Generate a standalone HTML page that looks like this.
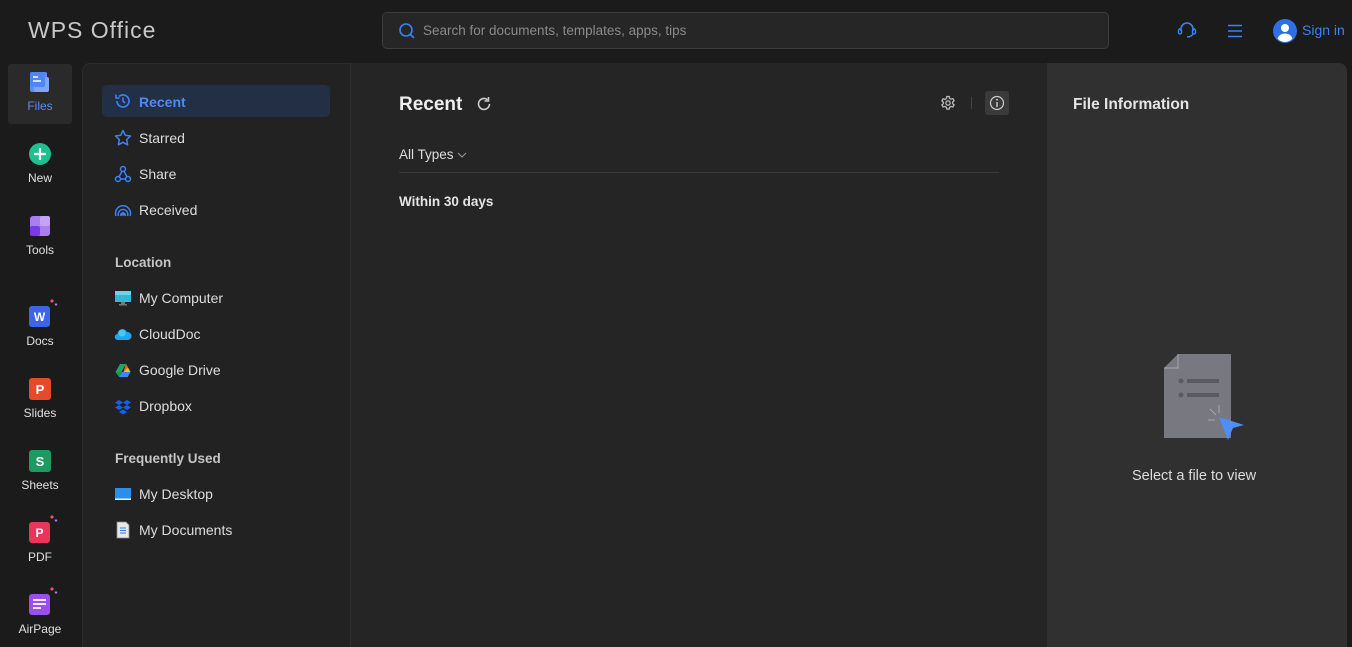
<!DOCTYPE html>
<html><head><meta charset="utf-8"><style>
*{margin:0;padding:0;box-sizing:border-box}
body{width:1352px;height:647px;overflow:hidden;background:#1b1b1b;font-family:"Segoe UI","Liberation Sans",sans-serif;color:#ddd;position:relative}
.abs{position:absolute}
.logo{left:28px;top:17px;font-size:23px;color:#c8c8c8;letter-spacing:1px;font-weight:300}
.search{left:382px;top:12px;width:727px;height:37px;border:1px solid #3c3c3c;border-radius:5px;background:#262626}
.search span{position:absolute;left:40px;top:10px;font-size:13.5px;color:#8a8a8a}
.rail-item{position:absolute;left:8px;width:64px;text-align:center;font-size:12px;color:#e0e0e0}
.side{left:82px;top:63px;width:268px;height:584px;background:#222;border-top-left-radius:8px;border-top:1px solid #2c2c2c;border-left:1px solid #2c2c2c}
.main{left:350px;top:63px;width:697px;height:584px;background:#252525;border-left:1px solid #2e2e2e}
.right{left:1047px;top:63px;width:300px;height:584px;background:#303030;border-top-right-radius:8px}
.nav{position:absolute;left:33px;font-size:14px;color:#ddd}
.ico{position:absolute;left:114px;width:18px;height:18px}
.hdr{position:absolute;left:115px;font-size:13.5px;font-weight:bold;color:#c5c5c5}
</style></head><body>
<div class="abs logo">WPS Office</div>
<div class="abs search">
<svg class="abs" style="left:15px;top:9px" width="18" height="18" viewBox="0 0 18 18"><circle cx="8" cy="8" r="6" fill="none" stroke="#3b82f6" stroke-width="1.6"/><path d="M12.5 12.5L16 16" stroke="#3b82f6" stroke-width="1.6"/></svg>
<span>Search for documents, templates, apps, tips</span></div>
<svg class="abs" style="left:1177px;top:21px" width="20" height="18" viewBox="0 0 20 18"><path d="M4 10V8a6 6 0 0 1 12 0v2" fill="none" stroke="#3b82f6" stroke-width="1.6"/><rect x="1.5" y="8" width="3" height="5" rx="1.5" fill="none" stroke="#3b82f6" stroke-width="1.4"/><rect x="15.5" y="8" width="3" height="5" rx="1.5" fill="none" stroke="#3b82f6" stroke-width="1.4"/><path d="M16 13q-2 3-6 3" fill="none" stroke="#3b82f6" stroke-width="1.4"/></svg>
<svg class="abs" style="left:1228px;top:24px" width="14" height="14" viewBox="0 0 14 14"><path d="M0 1.5h14M0 7h14M0 12.5h14" stroke="#3b82f6" stroke-width="1.5"/></svg>
<svg class="abs" style="left:1273px;top:19px" width="24" height="24" viewBox="0 0 24 24"><circle cx="12" cy="12" r="12" fill="#2f6fe4"/><circle cx="12" cy="9" r="4" fill="#fff"/><path d="M4.5 19.5q2-5 7.5-5t7.5 5q-3 3.5-7.5 3.5t-7.5-3.5z" fill="#fff"/></svg>
<div class="abs" style="left:1302px;top:22px;font-size:14px;color:#3b82f6">Sign in</div>

<div class="abs" style="left:8px;top:64px;width:64px;height:60px;background:#2a2a2a;border-radius:3px"></div>
<svg class="abs" style="left:30px;top:72px" width="20" height="20" viewBox="0 0 20 20"><rect x="0" y="0" width="17" height="20" rx="2" fill="#5b8ef5"/><rect x="4" y="5" width="15" height="15" rx="2" fill="#7ba6fa"/><rect x="0" y="0" width="15" height="15" rx="2" fill="#4f86f3"/><path d="M3 5h5M3 9h8" stroke="#fff" stroke-width="1.5"/></svg>
<div class="rail-item" style="top:99px;color:#5b8ef5">Files</div>
<svg class="abs" style="left:29px;top:143px" width="22" height="22"><circle cx="11" cy="11" r="11" fill="#1fbf8f"/><path d="M11 5v12M5 11h12" stroke="#fff" stroke-width="2.2"/></svg>
<div class="rail-item" style="top:171px">New</div>
<svg class="abs" style="left:30px;top:216px" width="20" height="20"><rect width="20" height="20" rx="3" fill="#a97ef0"/><rect x="10" width="10" height="10" rx="2" fill="#c4a3f5"/><rect y="10" width="10" height="10" rx="2" fill="#7b3ae8"/></svg>
<div class="rail-item" style="top:243px">Tools</div>
<svg class="abs" style="left:28px;top:298px" width="32" height="30"><path d="M24 1l2 2-2 2-2-2z" fill="#ef4f6c"/><path d="M28 5l1.5 1.5-1.5 1.5-1.5-1.5z" fill="#b86cf0"/><rect x="1" y="8" width="21" height="21" rx="3" fill="#3c66e8"/><text x="11.5" y="23" font-size="12" font-weight="bold" fill="#fff" text-anchor="middle" font-family="Liberation Sans">W</text></svg>
<div class="rail-item" style="top:334px">Docs</div>
<svg class="abs" style="left:29px;top:378px" width="22" height="22"><rect width="22" height="22" rx="3" fill="#e54a2b"/><text x="11" y="16" font-size="13" font-weight="bold" fill="#fff" text-anchor="middle" font-family="Liberation Sans">P</text></svg>
<div class="rail-item" style="top:406px">Slides</div>
<svg class="abs" style="left:29px;top:450px" width="22" height="22"><rect width="22" height="22" rx="3" fill="#1d9a62"/><text x="11" y="16" font-size="13" font-weight="bold" fill="#fff" text-anchor="middle" font-family="Liberation Sans">S</text></svg>
<div class="rail-item" style="top:478px">Sheets</div>
<svg class="abs" style="left:28px;top:514px" width="32" height="30"><path d="M24 1l2 2-2 2-2-2z" fill="#ef4f6c"/><path d="M28 5l1.5 1.5-1.5 1.5-1.5-1.5z" fill="#b86cf0"/><rect x="1" y="8" width="21" height="21" rx="3" fill="#e8355a"/><text x="11.5" y="23" font-size="12" font-weight="bold" fill="#fff" text-anchor="middle" font-family="Liberation Sans">P</text></svg>
<div class="rail-item" style="top:550px">PDF</div>
<svg class="abs" style="left:28px;top:586px" width="32" height="30"><path d="M24 1l2 2-2 2-2-2z" fill="#ef4f6c"/><path d="M28 5l1.5 1.5-1.5 1.5-1.5-1.5z" fill="#b86cf0"/><rect x="1" y="8" width="21" height="21" rx="3" fill="#9b4ef0"/><path d="M5 14h13M5 18h13M5 22h8" stroke="#fff" stroke-width="1.7"/></svg>
<div class="rail-item" style="top:622px">AirPage</div>

<div class="abs side"></div>
<div class="abs main"></div>
<div class="abs right"></div>

<div class="abs" style="left:102px;top:85px;width:228px;height:32px;background:#232f45;border-radius:5px"></div>
<svg class="ico" style="top:92px" viewBox="0 0 18 18"><path d="M3 9a6 6 0 1 0 2-4.5" fill="none" stroke="#3b82f6" stroke-width="1.7"/><path d="M2 2.5v3.5h3.5" fill="none" stroke="#3b82f6" stroke-width="1.6"/><path d="M9 5.5V9l2 2" fill="none" stroke="#3b82f6" stroke-width="1.6"/></svg>
<div class="nav abs" style="left:139px;top:94px;color:#4a8cf7;font-weight:bold">Recent</div>
<svg class="ico" style="top:129px" viewBox="0 0 18 18"><path d="M9 1.5l2.3 4.8 5.2.7-3.8 3.6.9 5.2L9 13.3l-4.6 2.5.9-5.2L1.5 7l5.2-.7z" fill="none" stroke="#3b82f6" stroke-width="1.5" stroke-linejoin="round"/></svg>
<div class="nav abs" style="left:139px;top:130px">Starred</div>
<svg class="ico" style="top:165px" viewBox="0 0 18 18" fill="none" stroke="#3b82f6" stroke-width="1.5"><circle cx="9" cy="4" r="2.5"/><circle cx="4" cy="14" r="2.5"/><circle cx="14" cy="14" r="2.5"/><path d="M8 6.3L5 11.8M10 6.3l3 5.5M6.5 14h5"/></svg>
<div class="nav abs" style="left:139px;top:166px">Share</div>
<svg class="ico" style="top:201px" viewBox="0 0 18 18" fill="none" stroke="#3b82f6" stroke-width="1.5"><path d="M2 15a7.5 7.5 0 1 1 14 0"/><path d="M4.5 15a4.8 4.8 0 1 1 9 0"/><path d="M7 15a2.2 2.2 0 1 1 4 0"/><circle cx="9" cy="13" r="1" fill="#3b82f6"/></svg>
<div class="nav abs" style="left:139px;top:202px">Received</div>
<div class="hdr" style="top:255px">Location</div>
<svg class="ico" style="top:290px" viewBox="0 0 18 18"><rect x="1" y="1" width="16" height="11" fill="#33b5dc"/><rect x="1" y="1" width="16" height="4" fill="#6fd2ec"/><rect x="7" y="12" width="4" height="3" fill="#777"/><rect x="5" y="14" width="8" height="1.5" fill="#777"/></svg>
<div class="nav abs" style="left:139px;top:290px">My Computer</div>
<svg class="ico" style="top:326px" viewBox="0 0 18 18"><path d="M4 14a3 3 0 0 1-.5-6A5 5 0 0 1 13 6a4 4 0 0 1 1 8z" fill="#1ea6ee"/><circle cx="8" cy="7" r="3.5" fill="#4bc6f5"/></svg>
<div class="nav abs" style="left:139px;top:326px">CloudDoc</div>
<svg class="ico" style="top:362px" viewBox="0 0 18 18"><path d="M6 2h6l-4 7-3 5.5L1.5 10z" fill="#1fa463"/><path d="M12 2l4.5 8h-7z" fill="#ffc107"/><path d="M16.5 10l-2.8 5H5l3-5z" fill="#4285f4"/><path d="M1.5 10L5 15l3-5z" fill="#0f9d58"/><path d="M12 2l2 3.5L9.5 10z" fill="#ea4335" opacity=".8"/></svg>
<div class="nav abs" style="left:139px;top:362px">Google Drive</div>
<svg class="ico" style="top:398px" viewBox="0 0 18 18" fill="#0f62fe"><path d="M5 2l4 2.5-4 2.5-4-2.5zM13 2l4 2.5-4 2.5-4-2.5zM5 7l4 2.5-4 2.5-4-2.5zM13 7l4 2.5-4 2.5-4-2.5zM9 11.5l4 2.5-4 2.5-4-2.5z"/></svg>
<div class="nav abs" style="left:139px;top:398px">Dropbox</div>
<div class="hdr" style="top:451px">Frequently Used</div>
<svg class="ico" style="top:486px" viewBox="0 0 18 18"><rect x="1" y="2" width="16" height="12" fill="#2b8ee8"/><rect x="1" y="12.5" width="16" height="1.5" fill="#dff"/></svg>
<div class="nav abs" style="left:139px;top:486px">My Desktop</div>
<svg class="ico" style="top:521px" viewBox="0 0 18 18"><path d="M3 1h9l3 3v13H3z" fill="#e8e8e8" stroke="#888" stroke-width=".8"/><path d="M6 7h6M6 9.5h6M6 12h6" stroke="#2b7de0" stroke-width="1"/></svg>
<div class="nav abs" style="left:139px;top:522px">My Documents</div>

<div class="abs" style="left:399px;top:94px;font-size:19px;font-weight:bold;color:#eee">Recent</div>
<svg class="abs" style="left:475px;top:95px" width="18" height="18" viewBox="0 0 18 18"><path d="M14.5 9a5.5 5.5 0 1 1-2-4.3" fill="none" stroke="#ccc" stroke-width="1.6"/><path d="M13.5 2v4h-4" fill="none" stroke="#ccc" stroke-width="1.6"/></svg>
<svg class="abs" style="left:940px;top:95px" width="16" height="16" viewBox="0 0 16 16" fill="none" stroke="#bbb" stroke-width="1.3"><circle cx="8" cy="8" r="2.2"/><path d="M6.8 1.5h2.4l.4 1.8 1.5.9 1.8-.6 1.2 2.1-1.4 1.2v1.8l1.4 1.2-1.2 2.1-1.8-.6-1.5.9-.4 1.8H6.8l-.4-1.8-1.5-.9-1.8.6-1.2-2.1 1.4-1.2V7.1L1.9 5.9l1.2-2.1 1.8.6 1.5-.9z"/></svg>
<div class="abs" style="left:971px;top:97px;width:1px;height:12px;background:#444"></div>
<div class="abs" style="left:985px;top:91px;width:24px;height:24px;background:#3a3a3a;border-radius:3px"></div>
<svg class="abs" style="left:989px;top:95px" width="16" height="16" viewBox="0 0 16 16"><circle cx="8" cy="8" r="6.5" fill="none" stroke="#ccc" stroke-width="1.2"/><path d="M8 7v5" stroke="#ccc" stroke-width="1.4"/><circle cx="8" cy="4.7" r="0.9" fill="#ccc"/></svg>
<div class="abs" style="left:399px;top:147px;font-size:13.5px;color:#ddd">All Types</div>
<svg class="abs" style="left:457px;top:151px" width="10" height="8"><path d="M1 2l4 4 4-4" fill="none" stroke="#999" stroke-width="1"/></svg>
<div class="abs" style="left:399px;top:172px;width:600px;height:1px;background:#3a3a3a"></div>
<div class="abs" style="left:399px;top:194px;font-size:13.5px;font-weight:bold;color:#e5e5e5">Within 30 days</div>

<div class="abs" style="left:1073px;top:96px;font-size:15.5px;font-weight:bold;color:#e5e5e5">File Information</div>
<svg class="abs" style="left:1162px;top:352px" width="84" height="92" viewBox="0 0 84 92"><path d="M16 2h53v84H2V16z" fill="#777880"/><path d="M2 16h14V2" fill="none" stroke="#aaa" stroke-width="1"/><circle cx="19" cy="29" r="2.5" fill="#5a5b62"/><circle cx="19" cy="43" r="2.5" fill="#5a5b62"/><rect x="25" y="27" width="32" height="4" fill="#5a5b62"/><rect x="25" y="41" width="32" height="4" fill="#5a5b62"/><path d="M57 65l25 8-11 3-5 12z" fill="#4f8ef7"/><path d="M48 57l6 6M57 53v8M46 68h7" stroke="#aaa" stroke-width="1"/></svg>
<div class="abs" style="left:1132px;top:468px;font-size:14.5px;color:#ddd">Select a file to view</div>
</body></html>
